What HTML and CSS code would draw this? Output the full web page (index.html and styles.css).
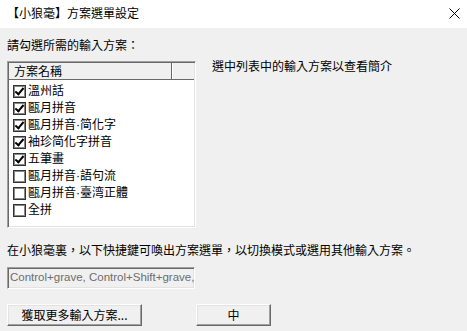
FILE: index.html
```html
<!DOCTYPE html>
<html lang="zh-Hant">
<head>
<meta charset="utf-8">
<title>方案選單設定</title>
<link rel="stylesheet" href="styles.css">
</head>
<body>
<div class="window">
  <div class="titlebar">
    <span class="title">【小狼毫】方案選單設定</span>
    <svg class="close" width="11" height="11" viewBox="0 0 11 11"><path d="M0.5 0.5 L10.5 10.5 M10.5 0.5 L0.5 10.5" stroke="#000" stroke-width="1" fill="none"/></svg>
  </div>
  <div class="content">
    <div class="prompt">請勾選所需的輸入方案：</div>
    <div class="main">
      <div class="listbox">
        <div class="header">
          <div class="hcol1">方案名稱</div>
          <div class="hcol2"></div>
        </div>
        <ul class="items">
          <li><span class="cb on"></span>溫州話</li>
          <li><span class="cb on"></span>甌月拼音</li>
          <li><span class="cb on"></span>甌月拼音·简化字</li>
          <li><span class="cb on"></span>袖珍简化字拼音</li>
          <li><span class="cb on"></span>五筆畫</li>
          <li><span class="cb"></span>甌月拼音·語句流</li>
          <li><span class="cb"></span>甌月拼音·臺湾正體</li>
          <li><span class="cb"></span>全拼</li>
        </ul>
      </div>
      <div class="hint">選中列表中的輸入方案以查看簡介</div>
    </div>
    <div class="desc">在小狼毫裏，以下快捷鍵可喚出方案選單，以切換模式或選用其他輸入方案。</div>
    <div class="field">Control+grave, Control+Shift+grave,</div>
    <div class="buttons">
      <button class="btn wide">獲取更多輸入方案...</button>
      <button class="btn narrow">中</button>
    </div>
  </div>
</div>
</body>
</html>
```
FILE: styles.css
```css
* { box-sizing: border-box; }
html, body { margin: 0; padding: 0; }
body {
  width: 467px;
  height: 331px;
  background: #f0f0f0;
  font-family: "Noto Sans CJK TC", "Noto Sans CJK SC", sans-serif;
  font-size: 12px;
  color: #000;
  overflow: hidden;
}
.titlebar {
  height: 28px;
  background: #fff;
  display: flex;
  align-items: center;
  justify-content: space-between;
  padding: 0 7px 2px 7px;
}
.title { line-height: 16px; }
.content { padding: 0 7px; }
.prompt { margin-top: 9px; line-height: 16px; }
.main { display: flex; align-items: flex-start; margin-top: 8px; }
.listbox {
  width: 189px;
  height: 167px;
  background: #fff;
  border-style: solid;
  border-width: 1px;
  border-color: #a0a0a0 #fff #fff #a0a0a0;
  box-shadow: inset 1px 1px 0 #696969, inset -1px -1px 0 #e3e3e3;
  padding: 1px;
}
.header {
  display: flex;
  height: 17px;
  background: #f0f0f0;
  border-bottom: 1px solid #696969;
}
.hcol1 {
  width: 163px;
  padding-left: 5px;
  line-height: 16px;
  border-right: 1px solid #696969;
  box-shadow: 1px 0 0 #fff;
}
.hcol2 { flex: 1; margin-left: 1px; }
.items {
  list-style: none;
  margin: 0;
  padding: 3px 0 0 4px;
  font-family: "Liberation Sans", "Noto Sans CJK TC", "Noto Sans CJK SC", sans-serif;
}
.items li {
  display: flex;
  align-items: center;
  height: 17px;
  line-height: 17px;
  white-space: nowrap;
}
.cb {
  width: 13px;
  height: 13px;
  border: 1px solid #333;
  box-shadow: inset 0 0 0 1px #888;
  background: #fff;
  margin-right: 2px;
  position: relative;
  flex: none;
}
.cb.on::after {
  content: "";
  position: absolute;
  left: 3px;
  top: 0px;
  width: 3px;
  height: 7px;
  border-right: 2px solid #000;
  border-bottom: 2px solid #000;
  transform: rotate(40deg);
}
.hint { margin-left: 16px; margin-top: -2px; line-height: 14px; }
.desc { margin-top: 14px; line-height: 16px; }
.field {
  margin-top: 9px;
  width: 188px;
  height: 22px;
  border-style: solid;
  border-width: 1px;
  border-color: #a0a0a0 #fff #fff #a0a0a0;
  box-shadow: inset 1px 1px 0 #696969, inset -1px -1px 0 #e3e3e3;
  padding: 0 2px;
  font-family: "Liberation Sans", sans-serif;
  font-size: 11.5px;
  line-height: 19px;
  color: #6d6d6d;
  white-space: nowrap;
  overflow: hidden;
}
.buttons { display: flex; margin-top: 15px; gap: 54px; }
.btn {
  height: 22px;
  background: #f0f0f0;
  font-family: "Noto Sans CJK TC", "Noto Sans CJK SC", sans-serif;
  font-size: 12px;
  color: #000;
  border-style: solid;
  border-width: 1px;
  border-color: #fff #696969 #696969 #fff;
  box-shadow: inset -1px -1px 0 #a0a0a0, inset 1px 1px 0 #e3e3e3;
  padding: 0;
  line-height: 18px;
}
.wide { width: 135px; }
.narrow { width: 75px; }
```
